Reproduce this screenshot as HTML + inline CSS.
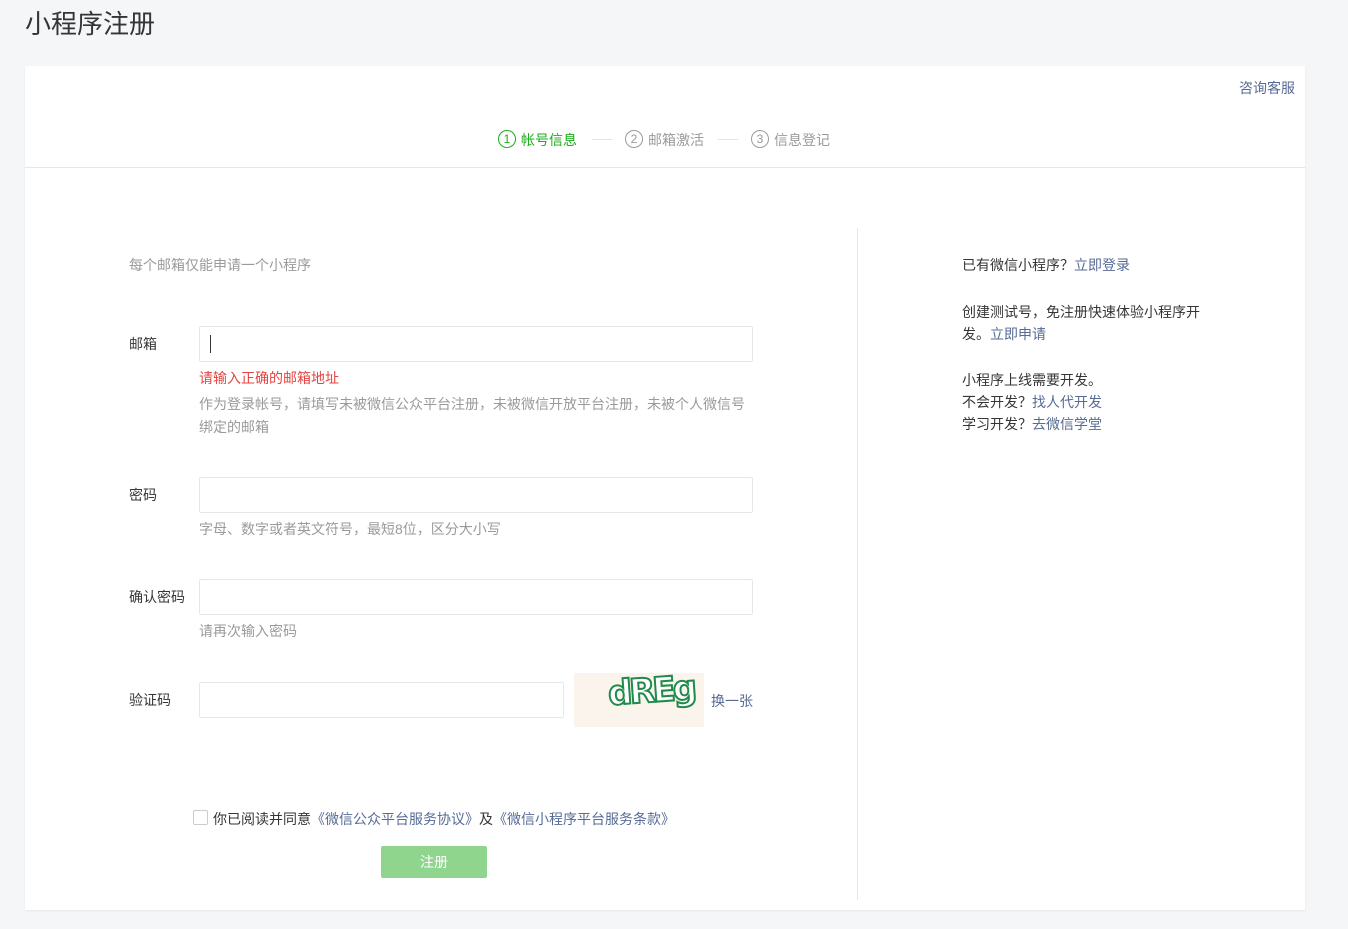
<!DOCTYPE html>
<html><head><meta charset="utf-8"><style>
body{margin:0;background:#f5f6f7;font-family:"Liberation Sans","Noto Sans CJK SC",sans-serif;width:1348px;height:929px;overflow:hidden;position:relative;color:#353535}
.abs{position:absolute}
h1{position:absolute;left:25px;top:4px;margin:0;font-size:26px;font-weight:normal;color:#353535}
.card{position:absolute;left:25px;top:66px;width:1280px;height:844px;background:#fff;box-shadow:0 1px 2px rgba(0,0,0,.06)}
.link{color:#576b95}
.t14{font-size:14px}
.gray{color:#9a9a9a}
.inp{position:absolute;height:34px;border:1px solid #e4e8eb;border-radius:2px;background:#fff;box-sizing:border-box}
.circ{display:inline-block;width:16px;height:16px;border:1px solid #9a9a9a;border-radius:50%;font-size:12px;line-height:16px;text-align:center;vertical-align:middle;margin-right:5px;position:relative;top:-2px}
.step{position:absolute;top:130px;font-size:14px;color:#9a9a9a}
</style></head><body>
<h1>小程序注册</h1>
<div class="card"></div>
<div class="abs t14 link" style="left:1239px;top:78px">咨询客服</div>
<div class="step" style="left:498px;color:#1aad19"><span class="circ" style="border-color:#1aad19">1</span>帐号信息</div>
<div class="abs" style="left:592px;top:139px;width:20px;height:1px;background:#e4e4e4"></div>
<div class="step" style="left:625px"><span class="circ">2</span>邮箱激活</div>
<div class="abs" style="left:718px;top:139px;width:20px;height:1px;background:#e4e4e4"></div>
<div class="step" style="left:751px"><span class="circ">3</span>信息登记</div>
<div class="abs" style="left:25px;top:167px;width:1280px;height:1px;background:#e7e7eb"></div>
<div class="abs" style="left:857px;top:228px;width:1px;height:672px;background:#e7e7eb"></div>

<div class="abs t14 gray" style="left:129px;top:255px">每个邮箱仅能申请一个小程序</div>
<div class="abs t14" style="left:129px;top:334px">邮箱</div>
<div class="inp" style="left:199px;top:326px;width:554px;height:36px"><div class="abs" style="left:10px;top:8px;width:1px;height:18px;background:#333"></div></div>
<div class="abs t14" style="left:199px;top:368px;color:#e64340">请输入正确的邮箱地址</div>
<div class="abs t14 gray" style="left:199px;top:393px;width:554px;line-height:23px">作为登录帐号，请填写未被微信公众平台注册，未被微信开放平台注册，未被个人微信号绑定的邮箱</div>
<div class="abs t14" style="left:129px;top:485px">密码</div>
<div class="inp" style="left:199px;top:477px;width:554px;height:36px"></div>
<div class="abs t14 gray" style="left:199px;top:519px">字母、数字或者英文符号，最短8位，区分大小写</div>
<div class="abs t14" style="left:129px;top:587px">确认密码</div>
<div class="inp" style="left:199px;top:579px;width:554px;height:36px"></div>
<div class="abs t14 gray" style="left:199px;top:621px">请再次输入密码</div>
<div class="abs t14" style="left:129px;top:690px">验证码</div>
<div class="inp" style="left:199px;top:682px;width:365px;height:36px"></div>
<div class="abs" style="left:574px;top:673px;width:130px;height:54px;background:#faf4ec;overflow:hidden">
<div class="abs" style="left:34px;top:-2px;font-size:34px;font-weight:bold;color:#fff;-webkit-text-stroke:2px #1f8a4c;letter-spacing:-3px;font-family:'DejaVu Sans',sans-serif;transform:rotate(-4deg)">dREg</div></div>
<div class="abs t14 link" style="left:711px;top:691px">换一张</div>
<div class="abs" style="left:193px;top:810px;width:15px;height:15px;border:1px solid #ccc;border-radius:2px;box-sizing:border-box"></div>
<div class="abs t14" style="left:213px;top:809px">你已阅读并同意<span class="link">《微信公众平台服务协议》</span>及<span class="link">《微信小程序平台服务条款》</span></div>
<div class="abs t14" style="left:381px;top:846px;width:106px;height:32px;background:#8fd58e;color:#fff;text-align:center;line-height:32px;border-radius:2px">注册</div>

<div class="abs t14" style="left:962px;top:255px">已有微信小程序？<span class="link">立即登录</span></div>
<div class="abs t14" style="left:962px;top:301px;width:245px;line-height:22px">创建测试号，免注册快速体验小程序开发。<span class="link">立即申请</span></div>
<div class="abs t14" style="left:962px;top:369px;line-height:22px">小程序上线需要开发。<br>不会开发？<span class="link">找人代开发</span><br>学习开发？<span class="link">去微信学堂</span></div>
</body></html>
